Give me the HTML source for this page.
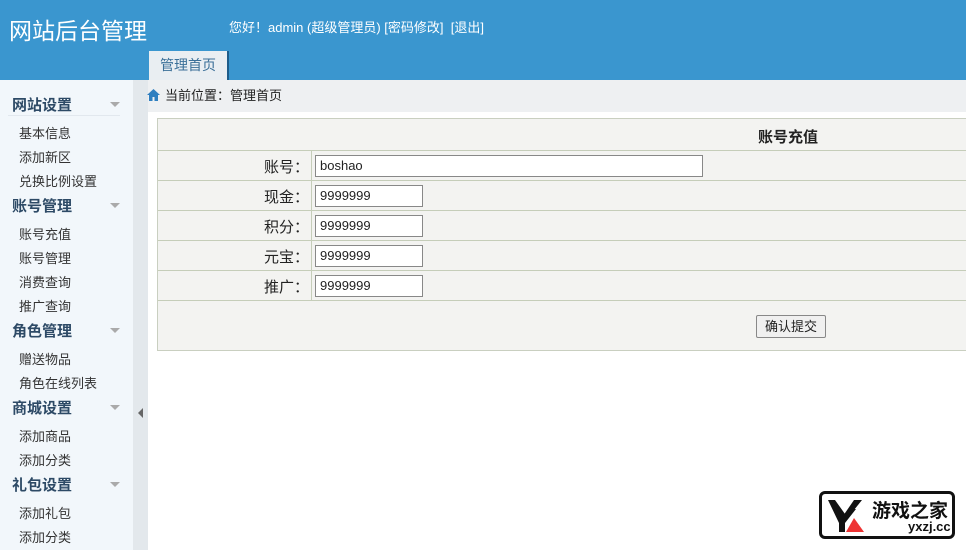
<!DOCTYPE html><html><head><meta charset="utf-8"><style>
*{margin:0;padding:0;box-sizing:border-box}
body{width:966px;height:550px;overflow:hidden;background:#fff;font-family:"Liberation Sans","Noto Sans CJK SC",sans-serif;position:relative;font-size:13px;color:#222}
.hd{position:absolute;left:0;top:0;width:966px;height:80px;background:#3a96cf}
.logo{position:absolute;left:9px;top:12px;font-size:23px;color:#fff}
.user{position:absolute;left:229px;top:17px;font-size:13px;color:#fff}
.tab{position:absolute;left:149px;top:51px;width:80px;height:29px;background:#e9eef2;color:#3a6f98;font-size:14px;text-align:center;line-height:28px;border-right:2px solid #1d5c8a}
.side{position:absolute;left:0;top:80px;width:133px;height:470px;background:#f2f7fb}
.bar{position:absolute;left:133px;top:80px;width:15px;height:470px;background:#e3e8ec}
.arr{position:absolute;left:138px;top:408px;width:0;height:0;border-top:5px solid transparent;border-bottom:5px solid transparent;border-right:5px solid #666}
.g{position:absolute;left:12px;font-size:15px;font-weight:bold;color:#2d4a66}
.g:after{content:"";position:absolute;left:98px;top:8px;border-left:5px solid transparent;border-right:5px solid transparent;border-top:5px solid #aaa}
.i{position:absolute;left:19px;font-size:13px;color:#333}
.ln{position:absolute;left:8px;width:112px;height:1px;background:#e2e8ee}
.bc{position:absolute;left:148px;top:80px;width:818px;height:32px;background:#eef0f2;font-size:13px;line-height:32px;padding-left:17px}
.home{position:absolute;left:147px;top:89px}
.tbl{position:absolute;left:157px;top:118px;width:820px;height:233px;background:#f3f3f1;border:1px solid #c9cfc0}
.r{position:absolute;left:0;width:820px;height:1px;background:#c5cdb9}
.lb{position:absolute;right:667px;font-size:15px;color:#222}
.inp{position:absolute;left:157px;height:22px;border:1px solid #888;background:#fff;font-size:13px;line-height:20px;padding-left:4px}
.btn{position:absolute;left:598px;top:196px;width:70px;height:23px;border:1px solid #888;background:#f0f0f0;font-size:13px;text-align:center;line-height:21px;border-radius:2px}
.wm{position:absolute;left:819px;top:491px;width:136px;height:48px;border:3px solid #111;border-radius:6px;background:#fff}
</style></head><body>
<div class="hd"><div class="logo">网站后台管理</div><div class="user">您好！admin (超级管理员) [密码修改]&nbsp;&nbsp;[退出]</div><div class="tab">管理首页</div></div>
<div class="side">
<div class="g" style="top:14px">网站设置</div><div class="ln" style="top:35px"></div>
<div class="i" style="top:43px">基本信息</div><div class="i" style="top:67px">添加新区</div><div class="i" style="top:91px">兑换比例设置</div>
<div class="g" style="top:115px">账号管理</div>
<div class="i" style="top:144px">账号充值</div><div class="i" style="top:168px">账号管理</div><div class="i" style="top:192px">消费查询</div><div class="i" style="top:216px">推广查询</div>
<div class="g" style="top:240px">角色管理</div>
<div class="i" style="top:269px">赠送物品</div><div class="i" style="top:293px">角色在线列表</div>
<div class="g" style="top:317px">商城设置</div>
<div class="i" style="top:346px">添加商品</div><div class="i" style="top:370px">添加分类</div>
<div class="g" style="top:394px">礼包设置</div>
<div class="i" style="top:423px">添加礼包</div><div class="i" style="top:447px">添加分类</div>
</div>
<div class="bar"></div><div class="arr"></div>
<div class="bc">当前位置：管理首页</div>
<svg class="home" width="13" height="12" viewBox="0 0 13 12"><path d="M6.5 0L0 6h2v6h3.5V8h2v4H11V6h2z" fill="#2f7fc0"/></svg>
<div class="tbl">
<div style="position:absolute;left:600px;top:7px;font-size:15px;font-weight:bold">账号充值</div>
<div class="r" style="top:31px"></div><div class="r" style="top:61px"></div><div class="r" style="top:91px"></div><div class="r" style="top:121px"></div><div class="r" style="top:151px"></div><div class="r" style="top:181px"></div>
<div style="position:absolute;left:153px;top:31px;width:1px;height:150px;background:#c5cdb9"></div>
<div class="lb" style="top:37px">账号：</div><div class="lb" style="top:67px">现金：</div><div class="lb" style="top:97px">积分：</div><div class="lb" style="top:127px">元宝：</div><div class="lb" style="top:157px">推广：</div>
<div class="inp" style="top:36px;width:388px">boshao</div>
<div class="inp" style="top:66px;width:108px">9999999</div>
<div class="inp" style="top:96px;width:108px">9999999</div>
<div class="inp" style="top:126px;width:108px">9999999</div>
<div class="inp" style="top:156px;width:108px">9999999</div>
<div class="btn">确认提交</div>
</div>
<div class="wm"><svg style="position:absolute;left:4px;top:4px" width="44" height="36" viewBox="0 0 44 36"><path d="M2 2h7l10 14 4-5h7L19 25v9h-6v-9z" fill="#111"/><path d="M28 2h8L20 22l-3-4z" fill="#111"/><path d="M28 20l10 14H20z" fill="#e33"/></svg>
<div style="position:absolute;left:50px;top:2px;font-size:19px;font-weight:bold;color:#111">游戏之家</div>
<div style="position:absolute;left:86px;top:25px;font-size:13px;font-weight:bold;color:#111">yxzj.cc</div></div>
</body></html>
